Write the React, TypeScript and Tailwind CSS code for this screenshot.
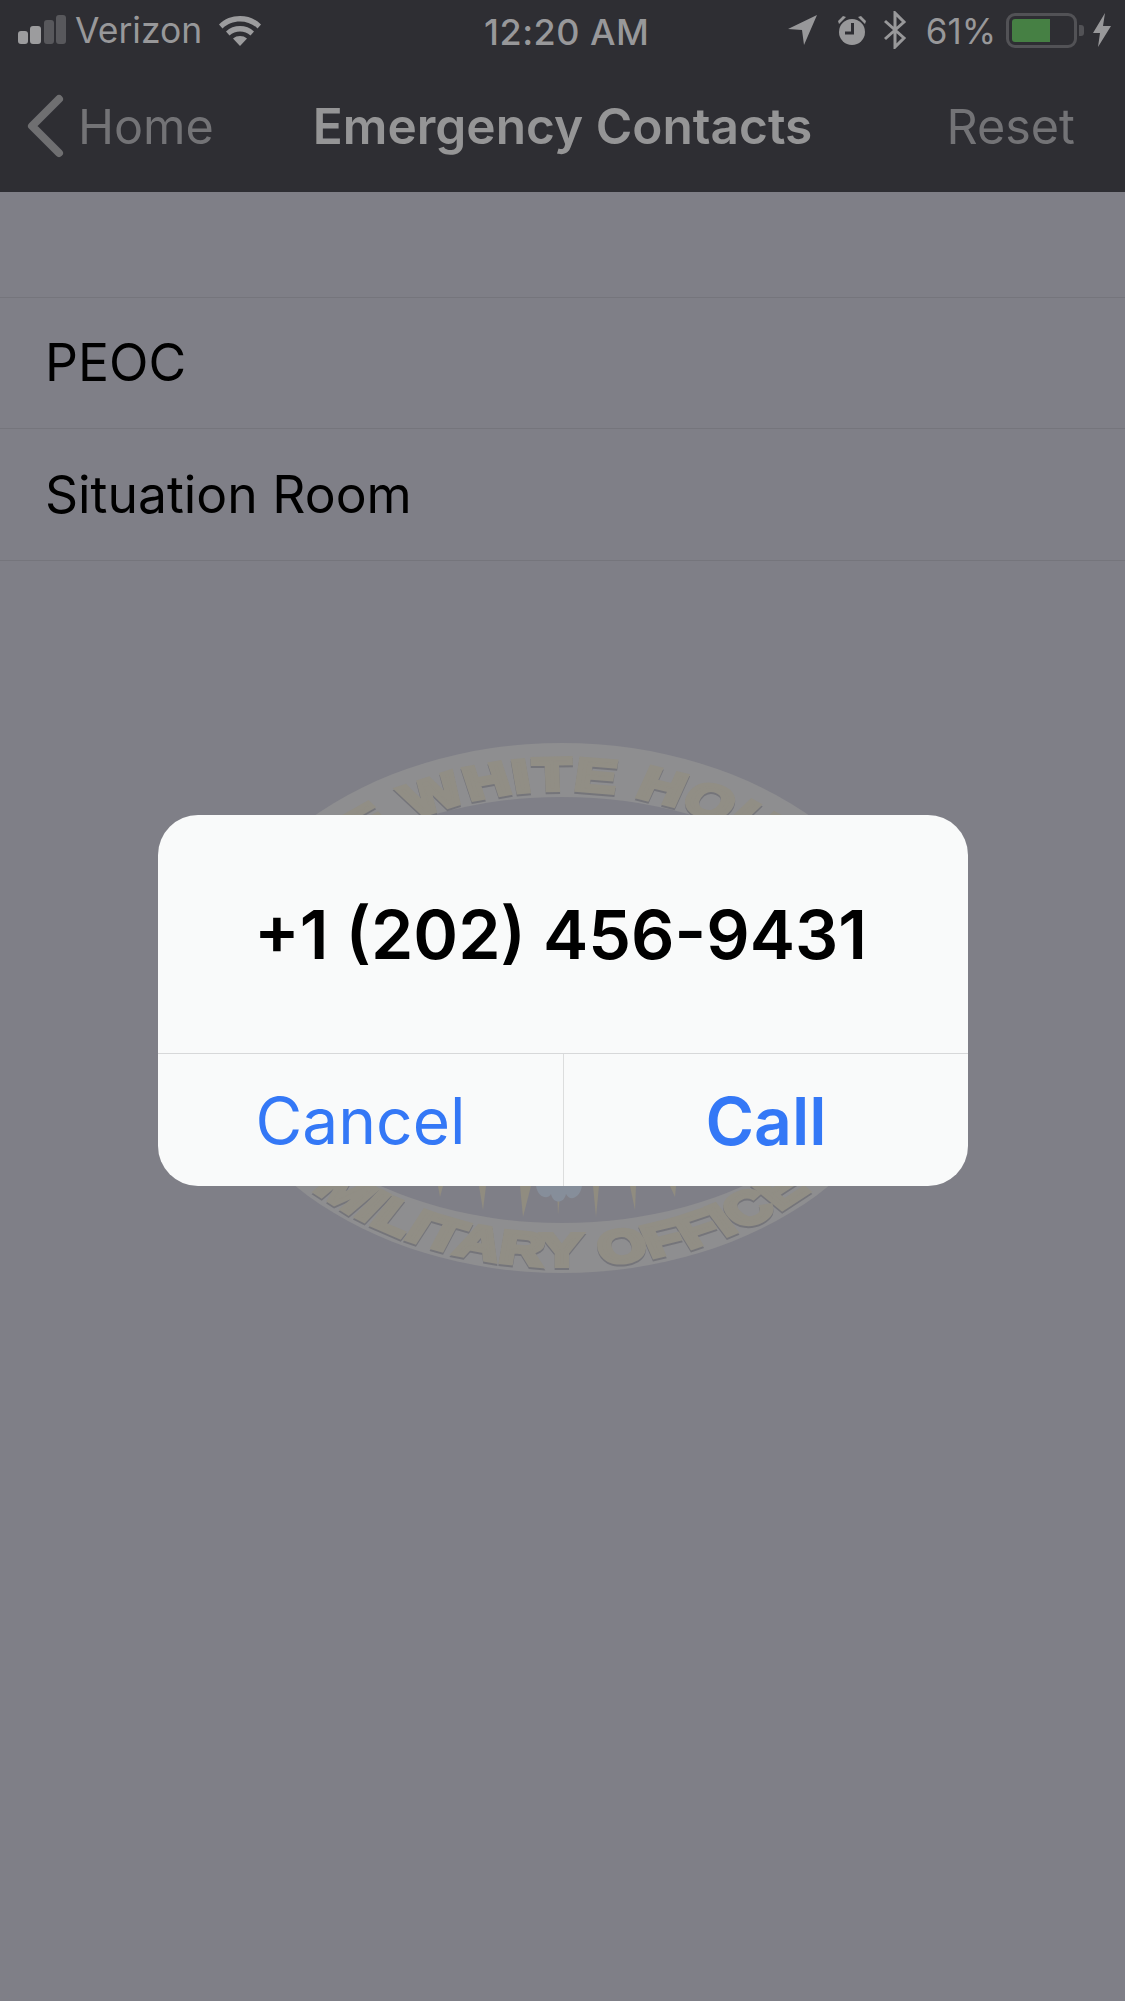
export default function App() {
  const font = "font-['Inter','Liberation_Sans',sans-serif]";
  return (
    <div className={`relative w-[1125px] h-[2001px] overflow-hidden bg-[#7f7f87] ${font}`}>
      <header className="bg-[#2e2e33]">
        <div className="relative h-[60px] flex items-center justify-between">
          <div className="flex items-center">
            <svg width="50" height="32" viewBox="0 0 50 32" className="ml-[17px]">
              <rect x="1" y="17" width="10" height="13" rx="3" fill="#9c9c9e" />
              <rect x="13" y="12" width="11" height="18" rx="3" fill="#9c9c9e" />
              <rect x="27" y="6" width="10" height="24" rx="3" fill="#58585c" />
              <rect x="39" y="1" width="10" height="29" rx="3" fill="#58585c" />
            </svg>
            <span className="ml-[8px] pt-[2px] text-[35.5px] leading-[40px] text-[#98989a]">Verizon</span>
            <svg width="44" height="32" viewBox="0 0 44 32" className="ml-[16px]">
              <path d="M1 10.5C6.5 4.8 14 2 22 2s15.500 2.800 21 8.500l-3.500 4C34.800 9.800 28.600 7.500 22 7.500S9.200 9.800 4.500 14.500z" fill="#9c9c9e" />
              <path d="M8 17.500c3.800-3.700 8.800-5.500 14-5.500s10.200 1.800 14 5.500l-3.500 4c-2.900-2.700-6.600-4-10.500-4s-7.600 1.300-10.500 4z" fill="#9c9c9e" />
              <path d="M15 24.500c2-1.700 4.400-2.500 7-2.500s5 .8 7 2.500L22 32z" fill="#9c9c9e" />
            </svg>
          </div>
          <span className="absolute left-[484px] top-[12px] text-[36px] leading-[40px] font-medium tracking-[0.5px] text-[#98989a]">12:20 AM</span>
          <div className="flex items-center">
            <svg width="32" height="32" viewBox="0 0 32 32">
              <path d="M1 15 30 1 17 31 15 16z" fill="#98989a" />
            </svg>
            <svg width="32" height="32" viewBox="0 0 32 32" className="ml-[17px]">
              <circle cx="16" cy="18" r="13" fill="#98989a" />
              <path d="M2 7l5-5 3 1-7 7z M30 7l-5-5-3 1 7 7z" fill="#98989a" />
              <path d="M16.500 9v10H9" stroke="#2e2e33" strokeWidth="3" fill="none" />
            </svg>
            <svg width="24" height="38" viewBox="0 0 24 38" className="ml-[15px]">
              <path d="M2 10l19 17-9 9V2l9 9L2 28" stroke="#98989a" strokeWidth="3" fill="none" />
            </svg>
            <span className="ml-[19px] pt-[2px] text-[35px] leading-[40px] text-[#98989a]">61%</span>
            <div className="ml-[10px] w-[71px] h-[35px] rounded-[9px] border-[3px] border-[#525256] p-[3px]">
              <div className="w-[38px] h-full rounded-l-[3px] bg-[#468044]" />
            </div>
            <div className="ml-[2px] w-[5px] h-[11px] rounded-r-[3px] bg-[#525256]" />
            <svg width="20" height="34" viewBox="0 0 20 34" className="ml-[8px] mr-[13px]">
              <path d="M13 0 1 20h7L6 34 19 13h-8z" fill="#98989a" />
            </svg>
          </div>
        </div>
        <div className="h-[132px] grid grid-cols-[1fr_auto_1fr] items-center text-[48.5px] leading-[60px]">
          <div className="flex items-center pl-[26px]">
            <svg width="38" height="64" viewBox="0 0 38 64">
              <path d="M33 5 6 32l27 27" stroke="#6f6f71" strokeWidth="8" strokeLinecap="round" strokeLinejoin="round" fill="none" />
            </svg>
            <span className="ml-[14px] pt-[2px] text-[#737376]">Home</span>
          </div>
          <div className="text-[49.6px] font-semibold text-[#959596]">Emergency Contacts</div>
          <div className="text-right pt-[2px] pr-[50px] text-[#737376]">Reset</div>
        </div>
      </header>

      <main className="relative z-10 text-[51.6px] leading-[60px] text-black">
        <div className="h-[106px] border-b border-[#75757c]" />
        <div className="h-[131px] flex items-center pb-[2px] pl-[45px] border-b border-[#75757c]">PEOC</div>
        <div className="h-[132px] flex items-center pb-[2px] pl-[45px] border-b border-[#75757c]">Situation Room</div>
      </main>

      <svg width="720" height="530" viewBox="-360 -265 720 530" className="absolute left-[202px] top-[743px]">
        <ellipse cx="0" cy="0" rx="360" ry="265" fill="#8e8e90" />
        <ellipse cx="0" cy="2" rx="322" ry="213" fill="#7f7f87" />
        <g fill="#908c80">
          <path d="M-41 60-40 88-38 60z M2 60 3 78 4 60z M46 60 48 88 49 60z" />
          <path d="M-124 178-122 189-119 178z M-83 178-79 202-76 178z M-42 178-39 209-31 178z M-5 178-4 207-1 178z M31 178 34 209 37 178z M68 178 73 202 74 178z M108 178 113 189 114 178z" />
        </g>
        <path d="M-26 178c2 12 12 14 15 8 2 10 13 10 15 0 4 8 14 4 16-8z" fill="#868e9a" />
        <defs>
          <path id="sealTop" d="M-218 0A218 218 0 0 1 218 0" />
          <path id="sealBottom" d="M-258 0A258 258 0 0 0 258 0" />
        </defs>
        <g transform="scale(1.358 1)" fontFamily="'Liberation Sans', sans-serif" fontWeight="700" fontSize="46" fill="#918e85" stroke="#918e85" strokeWidth="4" textAnchor="middle" letterSpacing="1" className="[filter:drop-shadow(0_2px_0_#75757a)]">
          <text>
            <textPath href="#sealTop" startOffset="50%">THE WHITE HOUSE</textPath>
          </text>
          <text>
            <textPath href="#sealBottom" startOffset="50%">MILITARY OFFICE</textPath>
          </text>
        </g>
      </svg>

      <section className="absolute left-[158px] top-[815px] z-20 w-[810px] h-[371px] rounded-[40px] bg-[#f9fafa] flex flex-col">
        <div className="h-[238px] flex items-center justify-center pr-[5px] text-[68px] leading-[80px] font-semibold text-black">+1 (202) 456-9431</div>
        <div className="flex-1 grid grid-cols-[406px_1fr] border-t border-[#d7d8d9] text-[64px] leading-[76px] text-[#3478f6]">
          <div className="flex items-center justify-center pt-[2px] border-r border-[#dcdddd]">Cancel</div>
          <div className="flex items-center justify-center pt-[2px] text-[66px] font-semibold">Call</div>
        </div>
      </section>
    </div>
  );
}
